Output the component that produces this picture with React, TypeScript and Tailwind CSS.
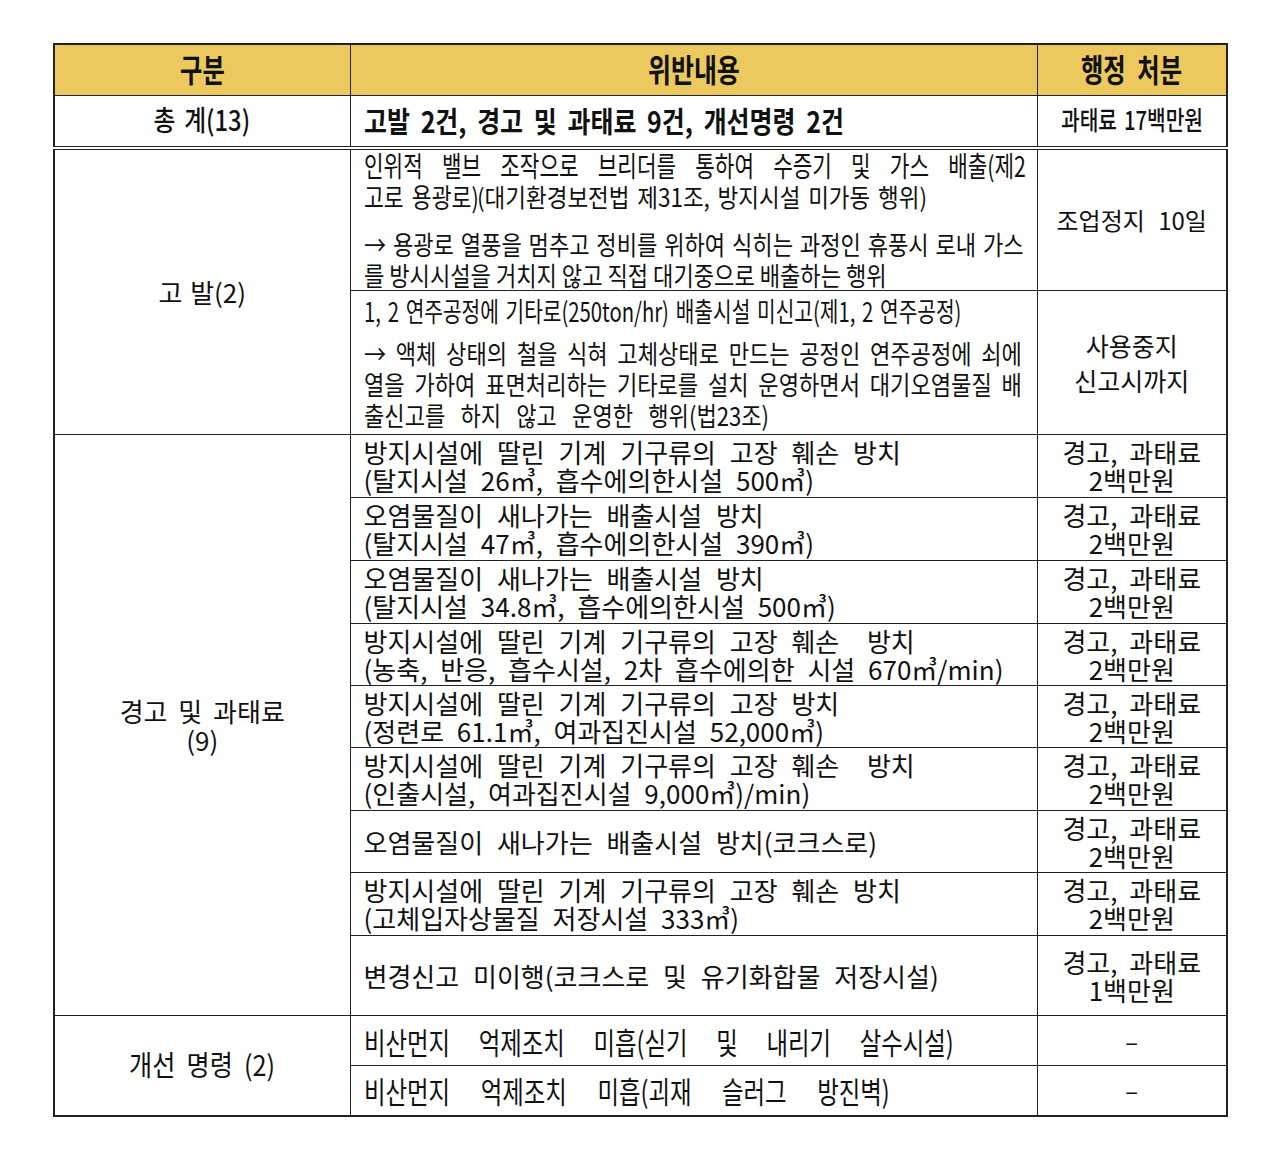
import React from 'react';

const cell = 'border border-[#222] align-middle';

function Spread({ words, className }: { words: string[]; className: string }) {
  return (
    <div className={`flex justify-between whitespace-nowrap ${className}`}>
      {words.map((w, i) => (
        <span key={i}>{w}</span>
      ))}
    </div>
  );
}

const warnRows: { a: string; b?: string; fine: string; h: string }[] = [
  { a: '방지시설에 딸린 기계 기구류의 고장 훼손 방치', b: '(탈지시설 26㎥, 흡수에의한시설 500㎥)', fine: '2백만원', h: 'h-[63px]' },
  { a: '오염물질이 새나가는 배출시설 방치', b: '(탈지시설 47㎥, 흡수에의한시설 390㎥)', fine: '2백만원', h: 'h-[63px]' },
  { a: '오염물질이 새나가는 배출시설 방치', b: '(탈지시설 34.8㎥, 흡수에의한시설 500㎥)', fine: '2백만원', h: 'h-[63px]' },
  { a: '방지시설에 딸린 기계 기구류의 고장 훼손  방치', b: '(농축, 반응, 흡수시설, 2차 흡수에의한 시설 670㎥/min)', fine: '2백만원', h: 'h-[62px]' },
  { a: '방지시설에 딸린 기계 기구류의 고장 방치', b: '(정련로 61.1㎥, 여과집진시설 52,000㎥)', fine: '2백만원', h: 'h-[62px]' },
  { a: '방지시설에 딸린 기계 기구류의 고장 훼손  방치', b: '(인출시설, 여과집진시설 9,000㎥)/min)', fine: '2백만원', h: 'h-[63px]' },
  { a: '오염물질이 새나가는 배출시설 방치(코크스로)', fine: '2백만원', h: 'h-[62px]' },
  { a: '방지시설에 딸린 기계 기구류의 고장 훼손 방치', b: '(고체입자상물질 저장시설 333㎥)', fine: '2백만원', h: 'h-[63px]' },
  { a: '변경신고 미이행(코크스로 및 유기화합물 저장시설)', fine: '1백만원', h: 'h-[80px]' },
];

export default function App() {
  return (
    <div className="min-h-[1163px] w-[1280px] bg-white pl-[53px] pt-[43px] font-['Noto_Sans_CJK_KR',sans-serif] text-[#111]">
      <table className="w-[1173px] table-fixed border-collapse border-2 border-[#222]">
        <colgroup>
          <col className="w-[296px]" />
          <col className="w-[687px]" />
          <col className="w-[190px]" />
        </colgroup>
        <tbody>
          {/* header */}
          <tr className="h-[51px] bg-[#ebc95e]">
            <td className={`${cell} text-center`}>
              <span className="inline-block scale-x-[0.76] text-[32px] font-bold leading-none">구분</span>
            </td>
            <td className={`${cell} text-center`}>
              <span className="inline-block scale-x-[0.78] text-[32px] font-bold leading-none">위반내용</span>
            </td>
            <td className={`${cell} text-center`}>
              <span className="inline-block scale-x-[0.76] text-[32px] font-bold leading-none [word-spacing:8px]">행정 처분</span>
            </td>
          </tr>

          {/* total */}
          <tr className="h-[53px]">
            <td className={`${cell} border-b-4 border-double text-center`}>
              <span className="inline-block scale-x-[0.85] text-[28px] font-medium leading-none [word-spacing:4px]">총 계(13)</span>
            </td>
            <td className={`${cell} border-b-4 border-double pl-[13px]`}>
              <Spread
                words={['고발', '2건,', '경고', '및', '과태료', '9건,', '개선명령', '2건']}
                className="w-[558px] origin-left scale-x-[0.86] text-[29px] font-semibold leading-none"
              />
            </td>
            <td className={`${cell} border-b-4 border-double text-center`}>
              <span className="inline-block scale-x-[0.78] text-[26px] font-medium leading-none [word-spacing:3px]">과태료 17백만원</span>
            </td>
          </tr>

          {/* accusation */}
          <tr className="h-[142px]">
            <td rowSpan={2} className={`${cell} text-center text-[26px] leading-[30px]`}>
              <span className="[word-spacing:2px]">고 발(2)</span>
            </td>
            <td className={`${cell} pl-[13px]`}>
              <div className="leading-[31px]">
                <Spread
                  words={['인위적', '밸브', '조작으로', '브리더를', '통하여', '수증기', '및', '가스', '배출(제2']}
                  className="w-[871px] origin-left scale-x-[0.76] text-[28px]"
                />
                <div className="flex whitespace-nowrap">
                  <span className="w-[113px] shrink-0">
                    <span className="inline-block origin-left scale-x-[0.8] text-[27px] [word-spacing:4px]">고로 용광로)</span>
                  </span>
                  <span className="inline-block origin-left scale-x-[0.9] text-[25px] [word-spacing:3px]">
                    (대기환경보전법 제31조, 방지시설 미가동 행위)
                  </span>
                </div>
              </div>
              <div className="mt-[11px] text-[26px] leading-[31px]">
                <Spread
                  words={['→', '용광로', '열풍을', '멈추고', '정비를', '위하여', '식히는', '과정인', '휴풍시', '로내', '가스']}
                  className="w-[776px] origin-left scale-x-[0.85]"
                />
                <div className="origin-left scale-x-[0.85] whitespace-nowrap">
                  를 방시시설을 거치지 않고 직접 대기중으로 배출하는 행위
                </div>
              </div>
            </td>
            <td className={`${cell} text-center text-[24px] leading-[30px]`}>
              <span className="[word-spacing:8px]">조업정지 10일</span>
            </td>
          </tr>
          <tr className="h-[144px]">
            <td className={`${cell} pl-[13px]`}>
              <div className="origin-left scale-x-[0.75] whitespace-nowrap text-[27px] leading-[31px] [word-spacing:3px]">
                1, 2 연주공정에 기타로(250ton/hr) 배출시설 미신고(제1, 2 연주공정)
              </div>
              <div className="mt-[11px] text-[26px] leading-[31px]">
                <Spread
                  words={['→', '액체', '상태의', '철을', '식혀', '고체상태로', '만드는', '공정인', '연주공정에', '쇠에']}
                  className="w-[774px] origin-left scale-x-[0.85]"
                />
                <Spread
                  words={['열을', '가하여', '표면처리하는', '기타로를', '설치', '운영하면서', '대기오염물질', '배']}
                  className="w-[774px] origin-left scale-x-[0.85]"
                />
                <div className="origin-left scale-x-[0.85] whitespace-nowrap [word-spacing:12px]">
                  출신고를 하지 않고 운영한 행위(법23조)
                </div>
              </div>
            </td>
            <td className={`${cell} text-center text-[25px] leading-[35px]`}>
              <div>사용중지</div>
              <div>신고시까지</div>
            </td>
          </tr>

          {/* warnings and fines */}
          {warnRows.map((r, i) => (
            <tr key={i} className={r.h}>
              {i === 0 && (
                <td rowSpan={warnRows.length} className={`${cell} text-center text-[26px] leading-[29px]`}>
                  <div className="[word-spacing:5px]">경고 및 과태료</div>
                  <div>(9)</div>
                </td>
              )}
              <td className={`${cell} pl-[13px] text-[26px] leading-[28px]`}>
                <div className="whitespace-pre [word-spacing:8px]">{r.a}</div>
                {r.b && <div className="whitespace-pre [word-spacing:7px]">{r.b}</div>}
              </td>
              <td className={`${cell} text-center text-[26px] leading-[28px]`}>
                <div className="[word-spacing:6px]">경고, 과태료</div>
                <div>{r.fine}</div>
              </td>
            </tr>
          ))}

          {/* improvement orders */}
          <tr className="h-[50px]">
            <td rowSpan={2} className={`${cell} text-center`}>
              <span className="inline-block scale-x-[0.9] text-[28px] leading-none [word-spacing:6px]">개선 명령 (2)</span>
            </td>
            <td className={`${cell} pl-[13px]`}>
              <Spread
                words={['비산먼지', '억제조치', '미흡(싣기', '및', '내리기', '살수시설)']}
                className="w-[756px] origin-left scale-x-[0.78] text-[30px] leading-none"
              />
            </td>
            <td className={`${cell} text-center text-[24px] leading-none`}>–</td>
          </tr>
          <tr className="h-[50px]">
            <td className={`${cell} pl-[13px]`}>
              <Spread
                words={['비산먼지', '억제조치', '미흡(괴재', '슬러그', '방진벽)']}
                className="w-[674px] origin-left scale-x-[0.78] text-[30px] leading-none"
              />
            </td>
            <td className={`${cell} text-center text-[24px] leading-none`}>–</td>
          </tr>
        </tbody>
      </table>
    </div>
  );
}
